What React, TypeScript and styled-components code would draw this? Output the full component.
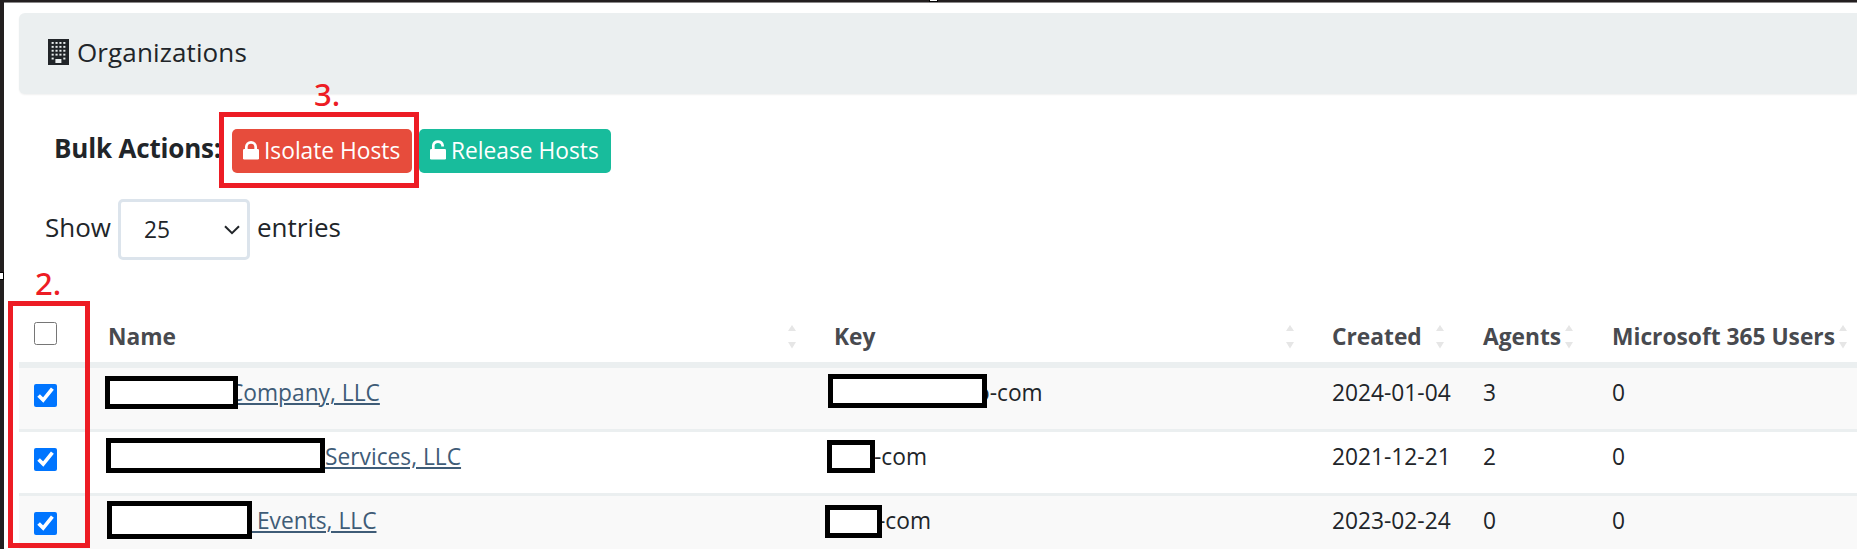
import React from "react";
import styled, { createGlobalStyle } from "styled-components";

const GlobalStyle = createGlobalStyle`
  * { box-sizing: border-box; }
  html, body { margin: 0; background: #fff; overflow: hidden; }
  body { font-family: "Open Sans", "Noto Sans", sans-serif; color: #212529; }
`;

const Frame = styled.div`
  position: relative;
  width: 1857px;
  height: 549px;
  overflow: hidden;
`;

const Page = styled.div`
  height: 549px;
  overflow: hidden;
  border-top: 2px solid #231f20;
  border-left: 4px solid #231f20;
  background: #fff;
  display: flex;
  flex-direction: column;
`;

const TopEdge = styled.div`
  flex: none;
  height: 1px;
  background: #8a8889;
`;

const PanelHeader = styled.header`
  flex: none;
  height: 81px;
  margin: 10px 0 0 15px;
  padding: 0 0 3px 29px;
  display: flex;
  align-items: center;
  gap: 8px;
  background: #ebeff0;
  border-radius: 6px 0 0 6px;
  box-shadow: 0 1px 2px rgba(0, 0, 0, 0.06);
`;

const Title = styled.h1`
  margin: 0;
  font-size: 26px;
  font-weight: 400;
  line-height: 34px;
  letter-spacing: 0.12px;
`;

const ActionBar = styled.div`
  flex: none;
  display: flex;
  align-items: flex-start;
  height: 70px;
  padding: 35px 0 0 50px;
`;

const ActionLabel = styled.strong`
  width: 178px;
  font-size: 26px;
  font-weight: 700;
  line-height: 38px;
  letter-spacing: -0.18px;
  white-space: nowrap;
`;

const ActionButton = styled.button<{ $color: string; $width: number }>`
  flex: none;
  width: ${(p) => p.$width}px;
  height: 44px;
  margin-right: 7px;
  padding: 0 0 0 11px;
  display: flex;
  align-items: center;
  gap: 5px;
  border: 0;
  border-radius: 5px;
  background: ${(p) => p.$color};
  color: #fff;
  font: 400 22.75px/30px "Open Sans", sans-serif;
  white-space: nowrap;

  svg {
    margin-bottom: 2px;
  }
`;

const LengthRow = styled.div`
  flex: none;
  display: flex;
  align-items: flex-start;
  height: 144px;
  padding: 35px 0 0 41px;
  font-size: 26px;
  line-height: 57px;
`;

const LengthWord = styled.span<{ $width?: number }>`
  width: ${(p) => (p.$width ? `${p.$width}px` : "auto")};
`;

const SelectBox = styled.div`
  width: 132px;
  height: 61px;
  margin-right: 7px;
  padding: 0 7px 0 23px;
  display: flex;
  align-items: center;
  justify-content: space-between;
  border: 3px solid #dce4ec;
  border-radius: 5px;
  font-size: 22.75px;
  line-height: 55px;
`;

const columns = "87px 726px 498px 151px 129px 247px";

const Table = styled.div`
  flex: none;
  margin-left: 15px;
`;

const HeadRow = styled.div`
  display: grid;
  grid-template-columns: ${columns};
  height: 60px;
  border-bottom: 6px solid #ebeff0;
`;

const HeadCell = styled.div<{ $sort: number }>`
  display: flex;
  justify-content: space-between;
  padding: 11px ${(p) => p.$sort}px 0 2px;
  color: #484a4f;
  font-size: 22.75px;
  font-weight: 700;
  line-height: 36px;
  white-space: nowrap;
`;

const SortIcon = styled.svg`
  flex: none;
  margin-top: 6px;
`;

const Row = styled.div<{ $striped: boolean }>`
  display: grid;
  grid-template-columns: ${columns};
  height: 64px;
  border-bottom: 3px solid #ebeff0;
  background: ${(p) => (p.$striped ? "#f9f9f9" : "#fff")};
`;

const Cell = styled.div`
  position: relative;
  padding: 8px 0 0 2px;
  font-size: 22.75px;
  line-height: 34px;
  white-space: nowrap;
`;

const CheckCell = styled.div<{ $head?: boolean }>`
  padding: ${(p) => (p.$head ? "14px 0 0 15px" : "16px 0 0 15px")};
`;

const Check = styled.input`
  display: block;
  width: 23px;
  height: 23px;
  margin: 0;
`;

const Tail = styled.span<{ $indent: number; $link?: boolean }>`
  display: inline-block;
  margin-left: ${(p) => p.$indent}px;
  color: ${(p) => (p.$link ? "#3f5c77" : "inherit")};
  text-decoration: ${(p) => (p.$link ? "underline" : "none")};
  text-decoration-thickness: 2px;
  text-underline-offset: 2px;
  white-space: pre;
`;

const Mask = styled.span<{ $x: number; $y: number; $w: number; $h: number }>`
  position: absolute;
  left: ${(p) => p.$x}px;
  top: ${(p) => p.$y}px;
  width: ${(p) => p.$w}px;
  height: ${(p) => p.$h}px;
  border: 5px solid #000;
  background: #fff;
`;

const Highlight = styled.div<{ $x: number; $y: number; $w: number; $h: number }>`
  position: absolute;
  left: ${(p) => p.$x}px;
  top: ${(p) => p.$y}px;
  width: ${(p) => p.$w}px;
  height: ${(p) => p.$h}px;
  border: 5px solid #ed1c24;
`;

const Step = styled.div<{ $x: number; $y: number }>`
  position: absolute;
  left: ${(p) => p.$x}px;
  top: ${(p) => p.$y}px;
  color: #ed1c24;
  font: 500 31px/40px "Noto Sans", sans-serif;
`;

const Handle = styled.div<{ $x: number; $y: number; $w: number; $h: number }>`
  position: absolute;
  left: ${(p) => p.$x}px;
  top: ${(p) => p.$y}px;
  width: ${(p) => p.$w}px;
  height: ${(p) => p.$h}px;
  border: 1px solid #000;
  background: #fff;
`;

const BuildingIcon = () => (
  <svg width="21" height="26" viewBox="0 0 21 26" fill="none">
    <path d="M0 0H21V26H0Z" fill="#212529" />
    {[3, 6.9, 10.8, 14.7, 18.6].map((y) =>
      [3.6, 7.5, 11.4, 15.3].map((x) =>
        y === 18.6 && x > 5 && x < 13 ? null : (
          <rect key={`${x}-${y}`} x={x} y={y} width="2.1" height="1.9" fill="#ebeff0" />
        )
      )
    )}
    <rect x="7.4" y="20" width="6" height="4" fill="#ebeff0" />
  </svg>
);

const LockIcon = ({ open = false }: { open?: boolean }) => (
  <svg width="16" height="20" viewBox="0 0 16 20" fill="none">
    <rect y="9" width="16" height="10.5" rx="1.2" fill="#fff" />
    <path
      d={open ? "M3.3 10V5.4A4.7 4.4 0 0 1 12.6 5.4V6.4" : "M3.3 10V7A4.7 4.7 0 0 1 12.7 7V10"}
      stroke="#fff"
      strokeWidth="2.7"
    />
  </svg>
);

const Sorter = () => (
  <SortIcon width="8" height="24" viewBox="0 0 8 24" fill="#e6e6e6">
    <path d="M4 0L8 6H0Z" />
    <path d="M0 17H8L4 23.5Z" />
  </SortIcon>
);

const heads = [
  { label: "Name", sort: 36 },
  { label: "Key", sort: 36 },
  { label: "Created", sort: 37 },
  { label: "Agents", sort: 37 },
  { label: "Microsoft 365 Users", sort: 10 },
];

const rows = [
  {
    name: "Company, LLC", nameIndent: 121, nameMask: [-1, 8, 133, 33],
    key: "o-com", keyIndent: 142, keyMask: [-4, 6, 159, 34],
    created: "2024-01-04", agents: 3, users: 0,
  },
  {
    name: "Services, LLC", nameIndent: 217, nameMask: [0, 6, 219, 35],
    key: "-com", keyIndent: 40, keyMask: [-5, 8, 48, 33],
    created: "2021-12-21", agents: 2, users: 0,
  },
  {
    name: " Events, LLC", nameIndent: 143, nameMask: [1, 5, 145, 38],
    key: "-com", keyIndent: 44, keyMask: [-7, 9, 57, 33],
    created: "2023-02-24", agents: 0, users: 0,
  },
];

const Redaction = ({ box }: { box: number[] }) => (
  <Mask $x={box[0]} $y={box[1]} $w={box[2]} $h={box[3]} />
);

export default function App() {
  return (
    <Frame>
      <GlobalStyle />
      <Page>
        <TopEdge />
        <PanelHeader>
          <BuildingIcon />
          <Title>Organizations</Title>
        </PanelHeader>
        <ActionBar>
          <ActionLabel>Bulk Actions:</ActionLabel>
          <ActionButton $color="#e74c3c" $width={180}>
            <LockIcon />
            Isolate Hosts
          </ActionButton>
          <ActionButton $color="#18bc9c" $width={192}>
            <LockIcon open />
            Release Hosts
          </ActionButton>
        </ActionBar>
        <LengthRow>
          <LengthWord $width={73}>Show</LengthWord>
          <SelectBox>
            25
            <svg width="16" height="10" viewBox="0 0 16 10" fill="none">
              <path d="M1 1.2L8 8.2L15 1.2" stroke="#212529" strokeWidth="2" />
            </svg>
          </SelectBox>
          <LengthWord>entries</LengthWord>
        </LengthRow>
        <Table>
          <HeadRow>
            <CheckCell $head>
              <Check type="checkbox" />
            </CheckCell>
            {heads.map((h) => (
              <HeadCell key={h.label} $sort={h.sort}>
                {h.label}
                <Sorter />
              </HeadCell>
            ))}
          </HeadRow>
          {rows.map((r, i) => (
            <Row key={r.created} $striped={i % 2 === 0}>
              <CheckCell>
                <Check type="checkbox" defaultChecked />
              </CheckCell>
              <Cell>
                <Tail $link $indent={r.nameIndent}>{r.name}</Tail>
                <Redaction box={r.nameMask} />
              </Cell>
              <Cell>
                <Tail $indent={r.keyIndent}>{r.key}</Tail>
                <Redaction box={r.keyMask} />
              </Cell>
              <Cell>{r.created}</Cell>
              <Cell>{r.agents}</Cell>
              <Cell>{r.users}</Cell>
            </Row>
          ))}
        </Table>
      </Page>
      <Highlight $x={219} $y={112} $w={200} $h={76} />
      <Highlight $x={8} $y={301} $w={82} $h={247} />
      <Step $x={314} $y={74}>3.</Step>
      <Step $x={35} $y={263}>2.</Step>
      <Handle $x={929} $y={-4} $w={9} $h={6} />
      <Handle $x={-1} $y={272} $w={5} $h={8} />
    </Frame>
  );
}
